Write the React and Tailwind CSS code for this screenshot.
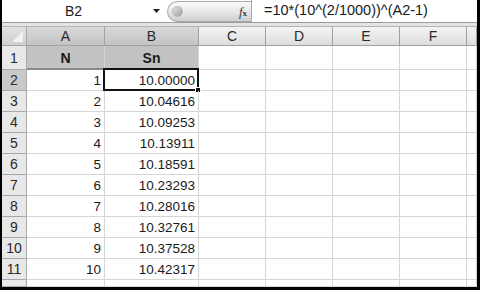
const colWidths = ['A', 'B', 'C', 'D', 'E', 'F', 'G'];

const values = [
  [1, '10.00000'],
  [2, '10.04616'],
  [3, '10.09253'],
  [4, '10.13911'],
  [5, '10.18591'],
  [6, '10.23293'],
  [7, '10.28016'],
  [8, '10.32761'],
  [9, '10.37528'],
  [10, '10.42317'],
];

const font = { fontFamily: '"Liberation Sans", Arial, sans-serif' };

const ColHeader = ({ label, active }) => (
  <div
    className={`flex items-center justify-center pt-[1px] border-r border-b border-[#a0a0a0] text-[14px] text-[#2a2a2a] ${
      active ? 'bg-gradient-to-b from-[#d9d9d9] to-[#c3c3c3]' : 'bg-gradient-to-b from-[#f4f4f4] to-[#dedede]'
    }`}
  >
    {label}
  </div>
);

const RowHeader = ({ label, active }) => (
  <div
    className={`flex items-center justify-center pt-[1px] border-r border-b border-[#a8a8a8] text-[14px] text-[#2a2a2a] ${
      active ? 'bg-[#c9c9c9]' : 'bg-[#e8e8e8]'
    }`}
  >
    {label}
  </div>
);

const Cell = ({ children, className = '' }) => (
  <div className={`flex items-center justify-end pr-[3px] pt-[2px] border-r border-b border-[#d6d6d6] text-[13.5px] text-[#1a1a1a] ${className}`}>
    {children}
  </div>
);

const FormulaBar = () => (
  <div className="flex h-[23px] border-b border-[#9c9c9c] bg-white">
    <div className="w-[143px] flex items-center justify-center text-[14px] text-[#1a1a1a]">B2</div>
    <div className="w-[22px] flex items-center justify-center">
      <svg width="7" height="4" viewBox="0 0 7 4">
        <path d="M0 0 H7 L3.5 4 Z" fill="#222" />
      </svg>
    </div>
    <div className="w-[84px] h-[21px] mt-[1px] flex items-center justify-between rounded-l-full border border-r-0 border-[#a9a9a9] bg-gradient-to-b from-[#fafafa] via-[#e9e9e9] to-[#cfcfcf] pl-[4px] pr-[4px]">
      <div className="w-[11px] h-[11px] rounded-full bg-gradient-to-br from-[#e6e6e6] to-[#9d9d9d] border border-[#b5b5b5]" />
      <span className="italic text-[13px] text-[#333]" style={{ fontFamily: '"Liberation Serif", serif' }}>
        f<span className="text-[9px] not-italic font-bold">x</span>
      </span>
    </div>
    <div className="flex-1 flex items-center pl-[12px] border-l border-[#a9a9a9] text-[14.5px] text-[#1a1a1a]">
      =10*(10^(2/1000))^(A2-1)
    </div>
  </div>
);

const App = () => {
  return (
    <div className="w-[480px] h-[290px] bg-black pl-[2px] pr-[3px] pb-[3px]" style={font}>
      <div className="w-full h-full flex flex-col bg-white overflow-hidden">
        <FormulaBar />
        <div className="h-[4px] bg-[#e4e4e4] border-b border-[#b4b4b4]" />
        <div className="flex-1 grid grid-cols-[25px_78px_94px_67px_67px_67px_67px_1fr] grid-rows-[19px_24px_repeat(10,21px)_1fr]">
          {/* corner */}
          <div className="relative border-r border-b border-[#a8a8a8] bg-gradient-to-b from-[#e2e2e2] to-[#cfcfcf]">
            <svg className="absolute right-[3px] bottom-[3px]" width="11" height="11" viewBox="0 0 11 11">
              <path d="M11 0 V11 H0 Z" fill="#f2f2f2" />
            </svg>
          </div>
          {colWidths.map((c) => (
            <ColHeader key={c} label={c === 'G' ? '' : c} active={c === 'A' || c === 'B'} />
          ))}

          {/* row 1 */}
          <RowHeader label="1" />
          <div className="flex items-center justify-center pt-[3px] bg-[#c2c2c2] border-r border-b-2 border-r-[#d6d6d6] border-b-[#8a8a8a] font-bold text-[14px] text-[#1a1a1a]">N</div>
          <div className="flex items-center justify-center pt-[3px] bg-[#c2c2c2] border-r border-b-2 border-r-[#d6d6d6] border-b-[#8a8a8a] font-bold text-[14px] text-[#1a1a1a]">Sn</div>
          {[0, 1, 2, 3, 4].map((i) => (
            <Cell key={i} />
          ))}

          {values.map(([n, s], r) => (
            <div key={n} className="contents">
              <RowHeader label={String(r + 2)} active={r === 0} />
              <Cell>{n}</Cell>
              <Cell className="relative">
                {s}
                {r === 0 && (
                  <div className="absolute -left-[2px] -top-[2px] -right-[1px] -bottom-[1px] border-2 border-[#111]">
                    <div className="absolute -right-[4px] -bottom-[4px] w-[6px] h-[6px] bg-[#111] border border-white" />
                  </div>
                )}
              </Cell>
              {[0, 1, 2, 3, 4].map((i) => (
                <Cell key={i} />
              ))}
            </div>
          ))}

          <RowHeader label="" />
          {[0, 1, 2, 3, 4, 5, 6].map((i) => (
            <Cell key={i} />
          ))}
        </div>
      </div>
    </div>
  );
};

export default App;
